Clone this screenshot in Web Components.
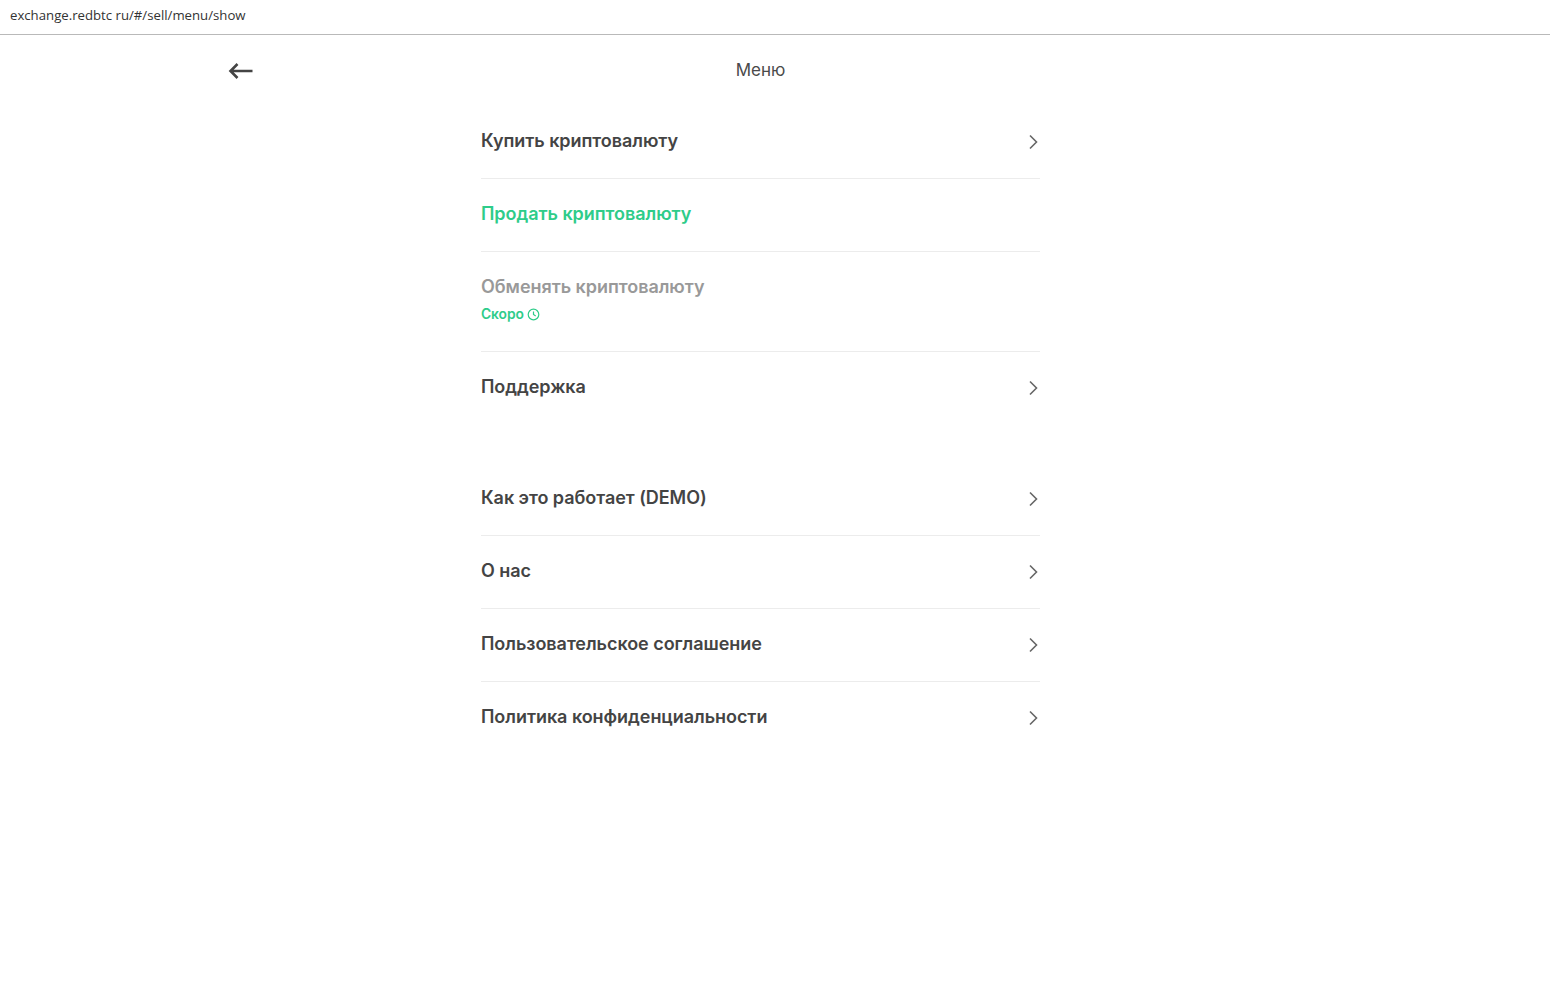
<!DOCTYPE html>
<html lang="ru">
<head>
<meta charset="utf-8">
<title>Меню</title>
<style>
  html, body { margin: 0; background: #fff; }
  body { font-family: Inter, "Liberation Sans", sans-serif; color: #444; }
</style>
</head>
<body>
<address-bar>exchange.redbtc ru/#/sell/menu/show</address-bar>
<menu-page>
  <menu-group>
    <menu-item>Купить криптовалюту</menu-item>
    <menu-item variant="active" nochevron>Продать криптовалюту</menu-item>
    <menu-item variant="disabled" nochevron soon="Скоро">Обменять криптовалюту</menu-item>
    <menu-item last>Поддержка</menu-item>
  </menu-group>
  <menu-group>
    <menu-item>Как это работает (DEMO)</menu-item>
    <menu-item>О нас</menu-item>
    <menu-item>Пользовательское соглашение</menu-item>
    <menu-item last>Политика конфиденциальности</menu-item>
  </menu-group>
</menu-page>
<script>
  class AddressBar extends HTMLElement {
    constructor() {
      super();
      this.attachShadow({ mode: "open" });
      this.shadowRoot.innerHTML = `
        <style>
          :host {
            display: flex;
            align-items: center;
            height: 30px;
            padding: 0 0 4px 10px;
            border-bottom: 1px solid #b9b9b9;
            font: 400 13.2px "Open Sans", "Liberation Sans", sans-serif;
            color: #333;
          }
        </style>
        <slot></slot>`;
    }
  }

  class MenuPage extends HTMLElement {
    constructor() {
      super();
      this.attachShadow({ mode: "open" });
      this.shadowRoot.innerHTML = `
        <style>
          :host { display: block; width: 1521px; }
          header {
            display: grid;
            grid-template-columns: 1fr auto 1fr;
            align-items: center;
            width: 1065px;
            height: 71px;
            margin: 0 auto;
          }
          svg { display: block; margin-top: 1px; }
          h1 {
            margin: 0 0 2px;
            font-size: 17px;
            font-weight: 400;
            color: #4a4a4a;
          }
          main {
            display: flex;
            flex-direction: column;
            gap: 39px;
            width: 559px;
            margin: 0 auto;
          }
        </style>
        <header>
          <svg width="25" height="18" viewBox="0 0 25 18" fill="none" stroke="#444" stroke-width="2.6">
            <path d="M24.5 9H2.5M9.5 2 2.5 9l7 7"/>
          </svg>
          <h1>Меню</h1>
        </header>
        <main><slot></slot></main>`;
    }
  }

  class MenuGroup extends HTMLElement {
    constructor() {
      super();
      this.attachShadow({ mode: "open" });
      this.shadowRoot.innerHTML = `
        <style>:host { display: block; }</style>
        <slot></slot>`;
    }
  }

  class MenuItem extends HTMLElement {
    constructor() {
      super();
      this.attachShadow({ mode: "open" });
      const soon = this.getAttribute("soon");
      const chevron = this.hasAttribute("nochevron") ? "" : `
        <svg class="chevron" width="10" height="16" viewBox="0 0 10 16" fill="none" stroke="#666" stroke-width="1.6">
          <path d="M2 1.5 8.5 8 2 14.5"/>
        </svg>`;
      const soonRow = soon ? `
        <div class="soon">${soon}
          <svg width="13" height="13" viewBox="0 0 13 13" fill="none" stroke="#2ecc8a" stroke-width="1.2">
            <circle cx="6.5" cy="6.5" r="5.3"/>
            <path d="M6.5 3.5v3l2.2 1.6"/>
          </svg>
        </div>` : "";
      this.shadowRoot.innerHTML = `
        <style>
          :host {
            display: flex;
            justify-content: space-between;
            align-items: flex-start;
            padding: 24px 2.5px 26px 0;
            border-bottom: 1px solid #ececec;
            font-size: 18px;
            font-weight: 600;
            letter-spacing: -0.05px;
            line-height: 22px;
            color: #444;
          }
          :host([last]) { border-bottom: 0; }
          :host([variant="active"]) { color: #2ecc8a; }
          :host([variant="disabled"]) { color: #999; }
          .chevron { margin-top: 4px; }
          .soon {
            display: flex;
            align-items: center;
            gap: 3px;
            margin: 8px 0 2px;
            font-size: 13.8px;
            line-height: 17px;
            color: #2ecc8a;
          }
        </style>
        <div><slot></slot>${soonRow}</div>
        ${chevron}`;
    }
  }

  customElements.define("address-bar", AddressBar);
  customElements.define("menu-page", MenuPage);
  customElements.define("menu-group", MenuGroup);
  customElements.define("menu-item", MenuItem);
</script>
</body>
</html>
